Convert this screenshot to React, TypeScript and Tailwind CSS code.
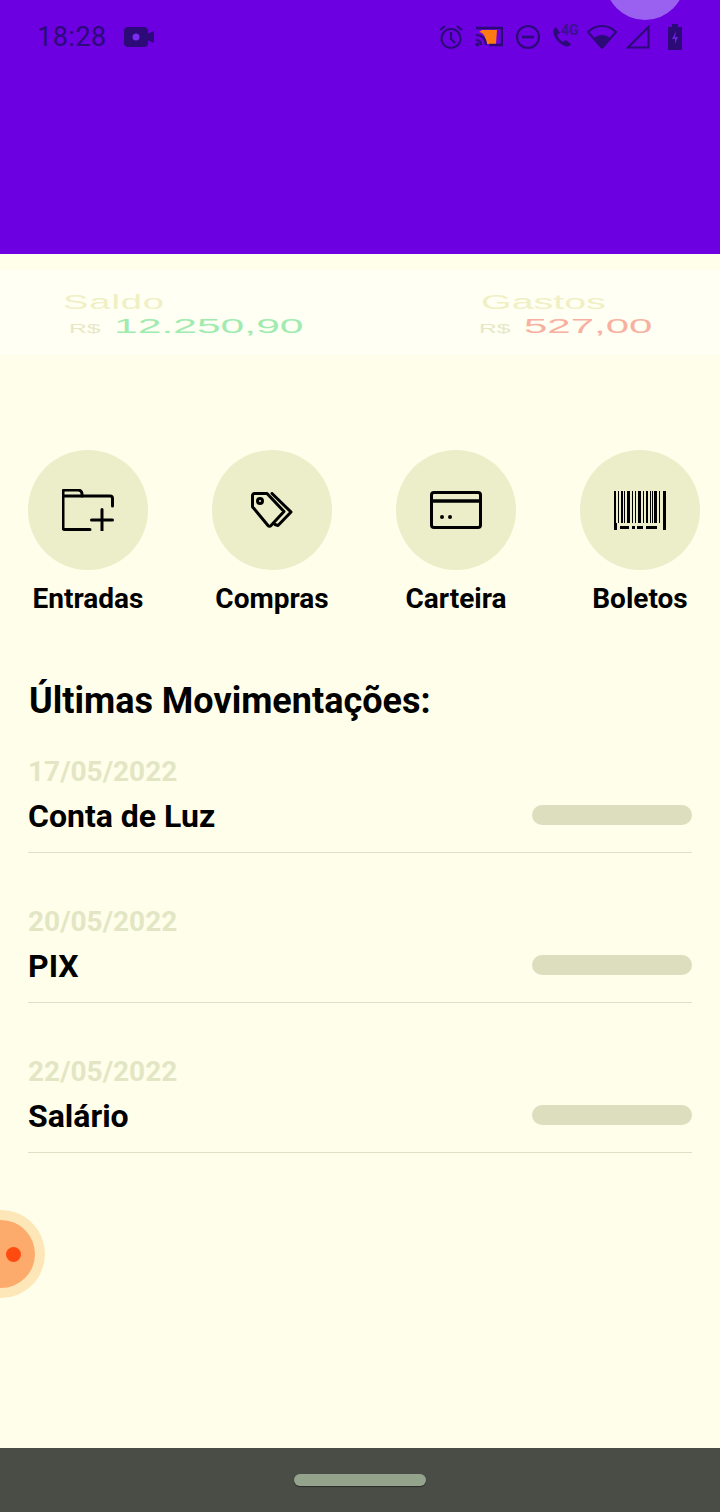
import React from 'react';

const statusIcon = '#2c0a78';

const StatusBar: React.FC = () => (
  <div className="flex items-center justify-between pt-[24px] pl-[37px] pr-[37px] h-[50px] text-[#2c0a78]">
    <div className="flex items-center gap-[17px]">
      <span className="text-[27px] leading-[28px] tracking-[0.5px]">18:28</span>
      <svg width="30" height="20" viewBox="0 0 30 20">
        <rect x="0" y="0" width="24" height="20" rx="4" fill={statusIcon} />
        <path d="M23 7l7-3v12l-7-3z" fill={statusIcon} />
        <circle cx="12" cy="10" r="3.5" fill="#7a2cf0" />
      </svg>
    </div>
    <div className="flex items-center">
      <svg width="26" height="26" viewBox="0 0 26 26" fill="none" stroke={statusIcon} strokeWidth="2.2">
        <circle cx="13" cy="14.5" r="9.5" />
        <path d="M13 8v7l4 4M2 6l5-4M24 6l-5-4" />
      </svg>
      <svg width="28" height="22" viewBox="0 0 28 22" fill="none" className="ml-[11px]">
        <path d="M7 4h15l-1 14H11C11 11 9 7 4 6z" fill="#ff7a10" />
        <path d="M1 2h26v17H14" stroke={statusIcon} strokeWidth="2.4" />
        <path d="M1 9c6 0 10 4 10 10M1 14c3 0 5 2 5 5" stroke={statusIcon} strokeWidth="2.2" />
        <circle cx="2.5" cy="18.5" r="2" fill={statusIcon} />
      </svg>
      <svg width="26" height="26" viewBox="0 0 26 26" fill="none" stroke={statusIcon} strokeWidth="2.2" className="ml-[12px]">
        <circle cx="13" cy="13" r="11" />
        <path d="M7 13h12" strokeWidth="2.6" />
      </svg>
      <div className="relative ml-[10px] w-[28px] h-[26px]">
        <svg width="24" height="26" viewBox="0 0 24 26" fill="none" className="absolute left-0 top-0">
          <path d="M5 3c-3 2-3 5-2 8 2 5 6 9 11 11 3 1 5 0 6-2l-5-4-3 2c-3-2-5-4-6-7l3-2z" fill={statusIcon} />
        </svg>
        <span className="absolute left-[10px] -top-[1px] text-[14px] leading-[14px] font-bold text-[#3d1090]">4G</span>
      </div>
      <svg width="30" height="24" viewBox="0 0 30 24" className="ml-[8px]">
        <path d="M1 7C9-1 21-1 29 7L15 23z" fill="none" stroke={statusIcon} strokeWidth="2" />
        <path d="M7 13c5-4 11-4 16 0l-8 10z" fill={statusIcon} />
      </svg>
      <svg width="24" height="24" viewBox="0 0 24 24" fill="none" stroke={statusIcon} strokeWidth="2.2" className="ml-[9px]">
        <path d="M2 22.5L22.5 2v20.5z" />
      </svg>
      <svg width="16" height="26" viewBox="0 0 16 26" className="ml-[17px]">
        <path d="M5 0h6v3h4v23H1V3h4z" fill={statusIcon} />
        <path d="M9 7l-4 8h3v5l3-7H8z" fill="#6a22d8" />
      </svg>
    </div>
  </div>
);

const FolderPlus = () => (
  <svg width="52" height="42" viewBox="0 0 52 42" fill="none" stroke="#000" strokeWidth="3" strokeLinecap="round" strokeLinejoin="round">
    <path d="M28 40.5H3a2 2 0 0 1-2-2V3a2 2 0 0 1 2-2h13a4 4 0 0 1 4 4v2h28a2.5 2.5 0 0 1 2.5 2.5V17" />
    <path d="M1 7h19" />
    <path d="M40 20.5v21M29.500 31h21" />
  </svg>
);

const Tags = () => (
  <svg width="42" height="36" viewBox="0 0 42 36" fill="none" stroke="#000" strokeWidth="3" strokeLinejoin="round" strokeLinecap="round">
    <path d="M1.500 3.500a2 2 0 0 1 2-2h12.500l17 18-13 14a2 2 0 0 1-3 0L2.500 16a2 2 0 0 1-1-2z" />
    <path d="M21 1.500l19 18.500-13 13.500-3-1" />
    <circle cx="9" cy="9" r="2.500" />
  </svg>
);

const Card = () => (
  <svg width="52" height="38" viewBox="0 0 52 38" fill="none" stroke="#000" strokeWidth="3">
    <rect x="1.5" y="1.5" width="49" height="35" rx="2.5" />
    <path d="M1.5 10h49" strokeWidth="3.5" />
    <circle cx="12" cy="26" r="2" fill="#000" stroke="none" />
    <circle cx="20" cy="26" r="2" fill="#000" stroke="none" />
  </svg>
);

const bars: [number, number][] = [[0, 2], [4, 1], [7, 2], [10, 1], [13, 3], [18, 1], [21, 1], [24, 3], [29, 1], [32, 2], [36, 1], [38, 1], [40, 3], [45, 1], [49, 3]];

const Barcode = () => (
  <svg width="52" height="39" viewBox="0 0 52 39">
    {bars.map(([x, w]) => (
      <rect key={x} x={x} y="0" width={w} height="32" fill="#000" />
    ))}
    <rect x="0" y="32" width="3" height="7" fill="#000" />
    <rect x="49" y="32" width="3" height="7" fill="#000" />
    <rect x="6" y="35" width="9" height="3" fill="#000" />
    <rect x="18" y="35" width="3" height="3" fill="#000" />
    <rect x="23" y="35" width="6" height="3" fill="#000" />
    <rect x="32" y="35" width="11" height="3" fill="#000" />
  </svg>
);

const actions = [
  { label: 'Entradas', icon: <FolderPlus /> },
  { label: 'Compras', icon: <Tags /> },
  { label: 'Carteira', icon: <Card /> },
  { label: 'Boletos', icon: <Barcode /> },
];

const rows = [
  { date: '17/05/2022', name: 'Conta de Luz' },
  { date: '20/05/2022', name: 'PIX' },
  { date: '22/05/2022', name: 'Salário' },
];

export default function App() {
  return (
    <div className="relative w-[720px] h-[1512px] flex flex-col overflow-hidden bg-[#fffeea] font-['Roboto',sans-serif]">
      <header className="relative h-[254px] bg-[#6c00e0] overflow-hidden">
        <StatusBar />
        <div className="absolute left-[605px] -top-[60px] w-[80px] h-[80px] rounded-full bg-[#9a60f0]" />
      </header>

      <section className="mt-[16px] h-[85px] bg-[#fffff4] flex justify-between pl-[63px] pr-[68px] pt-[21px] font-['Liberation_Sans',sans-serif]">
        <div className="w-[240px]">
          <p className="text-[20px] leading-[22px] text-[#f0f0c4] origin-left scale-x-[1.9] tracking-[0.5px]">Saldo</p>
          <p className="flex items-baseline pl-[6px] leading-[27px]">
            <span className="text-[13px] text-[#e6e8c4] w-[45px] origin-left scale-x-[1.9] inline-block">R$</span>
            <span className="text-[20px] text-[#a0ecb0] origin-left scale-x-[2.13] inline-block">12.250,90</span>
          </p>
        </div>
        <div className="w-[171px]">
          <p className="text-[20px] leading-[22px] text-[#f0f0c4] origin-left scale-x-[1.97]">Gastos</p>
          <p className="flex items-baseline leading-[27px] -ml-[2px]">
            <span className="text-[13px] text-[#e6e8c4] w-[45px] origin-left scale-x-[1.9] inline-block">R$</span>
            <span className="text-[20px] text-[#f8b0a0] origin-left scale-x-[2.1] inline-block">527,00</span>
          </p>
        </div>
      </section>

      <section className="mt-[95px] flex justify-between pl-[28px] pr-[20px]">
        {actions.map((a) => (
          <div key={a.label} className="w-[120px] flex flex-col items-center">
            <div className="w-[120px] h-[120px] rounded-full bg-[#ebeec9] flex items-center justify-center">{a.icon}</div>
            <span className="mt-[13px] text-[28px] leading-[32px] font-bold text-black whitespace-nowrap">{a.label}</span>
          </div>
        ))}
      </section>

      <h2 className="mt-[66px] pl-[29px] text-[36px] leading-[40px] font-bold text-black">Últimas Movimentações:</h2>

      <main className="mt-[35px] px-[28px] flex flex-col gap-[53px]">
        {rows.map((r) => (
          <div key={r.date} className="flex flex-col">
            <span className="text-[28px] leading-[32px] font-bold text-[#e3e6c4]">{r.date}</span>
            <div className="mt-[9px] flex items-center justify-between h-[38px]">
              <span className="text-[32px] leading-[38px] font-bold text-black">{r.name}</span>
              <div className="mb-[2px] w-[160px] h-[20px] rounded-[10px] bg-[#dcdebd]" />
            </div>
            <div className="mt-[17px] h-px bg-[#dfe1c6]" />
          </div>
        ))}
      </main>

      <div className="absolute -left-[43px] top-[1210px] w-[88px] h-[88px] rounded-full bg-[#fde7b8] flex items-center justify-center">
        <div className="w-[68px] h-[68px] rounded-full bg-[#fdab6c] flex items-center justify-center">
          <div className="relative left-[12px] w-[15px] h-[15px] rounded-full bg-[#ff4a10]" />
        </div>
      </div>

      <footer className="mt-auto h-[64px] bg-[#4a4c46] flex items-center justify-center pb-[1px]">
        <div className="w-[132px] h-[12px] rounded-full bg-[#94a48c] shadow-[0_1px_1px_rgba(0,0,0,0.4)]" />
      </footer>
    </div>
  );
}
